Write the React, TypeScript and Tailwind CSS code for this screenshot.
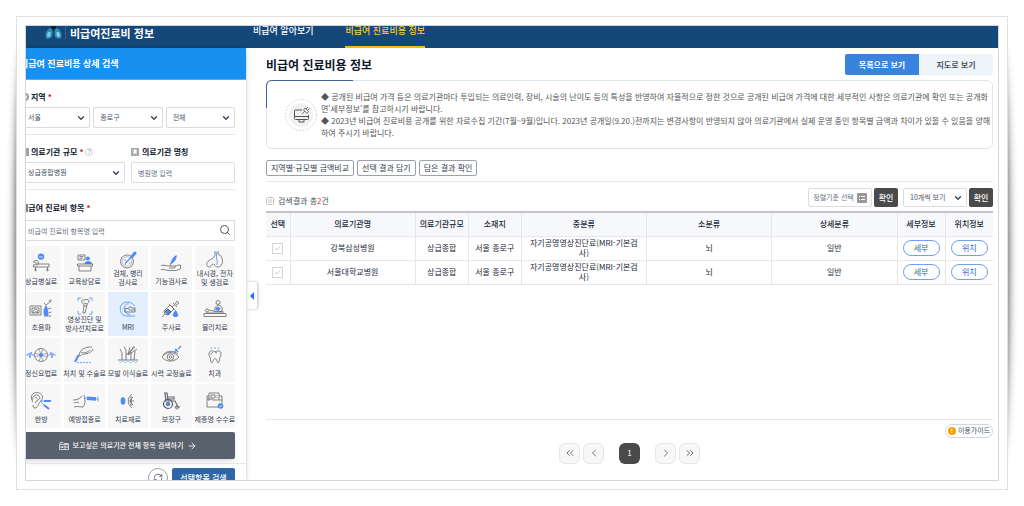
import { useState } from "react";
import type { ReactNode } from "react";
import { ArrowRight, ChevronDown, ChevronLeft, ChevronRight, ChevronsLeft, ChevronsRight, Search, RefreshCw, Check } from "lucide-react";

type Item = { name: string; lines: string[]; icon: ReactNode };

const BLUE = "#4f8bf9";

const items: Item[] = [
  {
    name: "bed",
    lines: ["상급병실료"],
    icon: (
      <>
        <circle cx="9" cy="2.6" r="3.2" fill={BLUE} stroke="none" />
        <path d="M7.4 2l.8 1.6.8-1.4.8 1.4.8-1.6" stroke="#fff" strokeWidth="0.5" />
        <path d="M1 7.6l5 2.4h11v3H1.5v-2.2h4.6M2 7l3.2-.6 2 3.2M3.5 13v3.2M15.5 13v3.2" />
        <circle cx="3.5" cy="16" r="0.8" />
        <circle cx="15.5" cy="16" r="0.8" />
      </>
    ),
  },
  {
    name: "education",
    lines: ["교육상담료"],
    icon: (
      <>
        <path d="M2 1h7v5H2zM3.5 2.6h4M3.5 4.2h3" />
        <circle cx="11.8" cy="4.6" r="2" fill={BLUE} stroke="none" />
        <path d="M8.4 10c0-4 7.600-4 7.600 0z" fill={BLUE} stroke="none" />
        <path d="M1.500 10h15v2h-15zM3 12v5h12v-5" />
      </>
    ),
  },
  {
    name: "specimen",
    lines: ["검체, 병리", "검사료"],
    icon: (
      <>
        <circle cx="8" cy="10.500" r="6.500" />
        <circle cx="8" cy="10.500" r="4.800" strokeWidth="0.4" />
        <path d="M6 12.500l8-8" stroke={BLUE} strokeWidth="1.200" />
        <path d="M13 5.500l3-3.500" stroke={BLUE} strokeWidth="3" strokeLinecap="round" />
        <path d="M5 9h2M6 13.500h1M10 12h1.500" stroke={BLUE} />
      </>
    ),
  },
  {
    name: "function",
    lines: ["기능검사료"],
    icon: (
      <>
        <path d="M9 9l-1 3" stroke={BLUE} />
        <path d="M8.500 10.500c0-4 3-8 6-9.500 1 3-2 7.500-6 9.500z" fill={BLUE} stroke="none" />
        <path d="M-1 11.500c3-1 5 .5 8 .5h6c2 0 4-1.500 5.500-1v4c-2 0-3 1.500-5 1.500H7c-3 0-5-1.500-8-1M7 14h5l2-1.500" />
      </>
    ),
  },
  {
    name: "endoscopy",
    lines: ["내시경, 전자", "및 생검료"],
    icon: (
      <>
        <path d="M9 0v4c0 3-4 4-6 5.500-4 3-2 7.500 1 6.500 2-1 1-3 3-3" />
        <path d="M12 0v3c6 2 6 13 0 13-2 0-3-1-4-3" />
        <path d="M10.500 1v6c0 3 2 4 0 7" stroke={BLUE} />
      </>
    ),
  },
  {
    name: "ultrasound",
    lines: ["초음파"],
    icon: (
      <>
        <path d="M-2 6h11v9H-2zM0 8h7v5H0zM1 13c0-5 5-5 5 0M2.500 12.500c1-1.500 2-1 2.500 0" />
        <path d="M12 3l2 2 4-3M18 2c2-1 2-2 .5-2s-1.500 1-.5 2zM16 9l3-1M16.500 13l3-1M12 16h7" />
        <path d="M14 5c-3 4-3 9-1.500 11h3.500c1-3 0-8-2-11z" fill={BLUE} stroke="none" />
      </>
    ),
  },
  {
    name: "radiology",
    lines: ["영상진단 및", "방사선치료료"],
    icon: (
      <>
        <path d="M2 4V1h3M13 1h3v3M16 14v3h-3M5 17H2v-3" stroke={BLUE} />
        <path d="M6 5c-1-2 1-3 2-1.500C9 2 13 2 13 4c0 2-2 2-2 4l-2 8H7l1-8c0-2-2-1-2-3zM8 6l3 1M8 9h3" />
      </>
    ),
  },
  {
    name: "mri",
    lines: ["MRI"],
    icon: (
      <>
        <path d="M8 2C-1 2-1 16 8 16h8M8 2c3 0 6 1 7.500 4M11 14.500c-7 0-8-10-1.500-11" stroke={BLUE} />
        <path d="M6 8.500h3c1-2 3-2 4-.5h3v4H6zM9 8.500l2 1.500h5" />
      </>
    ),
  },
  {
    name: "injection",
    lines: ["주사료"],
    icon: (
      <>
        <path d="M0 17l3-3M3 14l-1-3 6-6 4 4-6 6zM7 4l6 6M10 7l3-3M11 3l4 4M13 4l2-3 2 2-3 2" />
        <path d="M3 11.500L6 9l3 3-3 2.500z" fill={BLUE} stroke="#345" />
        <path d="M13.500 10c-5 6-2 7 0 7s5-1 0-7z" fill={BLUE} stroke="none" />
      </>
    ),
  },
  {
    name: "physio",
    lines: ["물리치료"],
    icon: (
      <>
        <circle cx="12" cy="2.500" r="2" />
        <path d="M8.500 11c0-7 7-8 8-1l-3 2" />
        <path d="M9.500 10c0-4 4-4 5-1l-2 2z" fill={BLUE} stroke="none" />
        <circle cx="1" cy="10.500" r="1.500" />
        <path d="M3 10l6 1.500h8v1.500H0M-2 13.500h22v3H-2z" />
      </>
    ),
  },
  {
    name: "mental",
    lines: ["정신요법료"],
    icon: (
      <>
        <path d="M-6 9h2l1-2 1 5 1-6 1 3h2M16 9h2l1-3 1 6 1-5 1 2h2" stroke={BLUE} />
        <circle cx="9" cy="9" r="6.500" />
        <path d="M3 7c4 2 8 2 12 0M3 11c4-2 8-2 12 0M7 3c2 4 2 8 0 12M11 3c-2 4-2 8 0 12" strokeWidth="0.6" />
        <circle cx="9" cy="9" r="2" fill={BLUE} stroke="none" />
      </>
    ),
  },
  {
    name: "surgery",
    lines: ["처치 및 수술료"],
    icon: (
      <>
        <path d="M16 1c-4 0-10 1-12 5l-1 4c2 0 3-2 5-2 4 0 8-2 9-5M5 6c3 2 7 0 9-2" />
        <path d="M2.500 9L-1 16" stroke={BLUE} strokeWidth="2" />
        <path d="M1 16.500h15" stroke={BLUE} strokeDasharray="2 1" />
      </>
    ),
  },
  {
    name: "hair",
    lines: ["모발 이식술료"],
    icon: (
      <>
        <path d="M-1 14h4V7M3 7L1 3M3 14h4V4L5 1M7 14h5V6M12 14h3l1-9M15 14h4M7 9l9-8M9 9l9-6M11 1l-2 8M15 0l-5 8" />
        <path d="M0 16c2 1 3-2 5 0s3-2 5 0 3-2 5 0 3-1 4 0" stroke={BLUE} strokeWidth="0.5" />
      </>
    ),
  },
  {
    name: "vision",
    lines: ["시력 교정술료"],
    icon: (
      <>
        <path d="M0 11c4-6 12-6 17 0-5 5.500-13 5.500-17 0zM1 9c4-5 11-4.500 15-1" />
        <circle cx="8.500" cy="11" r="3.300" />
        <circle cx="8.500" cy="11" r="1.300" />
        <path d="M12 7l3-4M13 3l3 3M16 3l3-3" stroke={BLUE} strokeWidth="1.200" />
      </>
    ),
  },
  {
    name: "dental",
    lines: ["치과"],
    icon: (
      <>
        <path d="M9 1v2M5 1.500l.6 1.400M13 1.500l-.6 1.400" stroke={BLUE} />
        <path d="M9 6C6 4 3 4.500 3 8c0 2.500 1.500 3 1.500 5.500 0 3.500 2 4.500 2.500 1.500.4-3 3.600-3 4 0 .5 3 2.500 2 2.500-1.500 0-2.500 1.500-3 1.500-5.500 0-3.500-3-4-6-2zM5 8.500c0-1.500 1-2 2-2M9 6l2 1" />
      </>
    ),
  },
  {
    name: "oriental",
    lines: ["한방"],
    icon: (
      <>
        <path d="M1 10C-4 3 3-1 7 1c5 2 4 6 1 9-2 2-2 6-5 6-2 0-2-2-2-3M1 8c-1-4 2-5 4-5 4 1 3 4 1 5-2 0-1 2-3 3M3 6c1-1 2 0 2 1" />
        <path d="M8 9h4M9 10l3 3" stroke={BLUE} />
        <path d="M12 9h7M12 13l5 4" stroke={BLUE} strokeWidth="2" />
      </>
    ),
  },
  {
    name: "vaccine",
    lines: ["예방접종료"],
    icon: (
      <>
        <path d="M-3 8c4 0 7-1 9-4M8 3c1 4 2 8-1 12-3 0-7-1-9 0M-2 11c2-1 4-1 5 0" />
        <path d="M8 6h3M20 7h2M22 4.500v5" stroke={BLUE} />
        <path d="M11 6.300l9 .8" stroke={BLUE} strokeWidth="3.500" />
      </>
    ),
  },
  {
    name: "material",
    lines: ["치료재료"],
    icon: (
      <>
        <ellipse cx="4" cy="9" rx="2.400" ry="3.800" fill={BLUE} stroke="none" />
        <path d="M13 2c-5 4-5 10 0 14M14 5c-3 3-3 5 0 8M12 4v10M10 9h5" />
      </>
    ),
  },
  {
    name: "aid",
    lines: ["보장구"],
    icon: (
      <>
        <path d="M2 1h3l1 8h7l3 6h2M6 5h6v2H6M3 1l1 9M13 15h3" strokeWidth="1.200" />
        <circle cx="6" cy="12" r="4.500" stroke="#3f5a8c" strokeWidth="1.200" />
        <circle cx="6" cy="12" r="1.800" fill={BLUE} />
        <circle cx="15" cy="15.500" r="1.500" />
      </>
    ),
  },
  {
    name: "certificate",
    lines: ["제증명 수수료"],
    icon: (
      <>
        <path d="M3 9V1h10v7M5 3h4v3H5zM10.500 3.500h1M10.500 5.500h1M1 4h2M1 4v11h15V8H7L5 7H1M13 4h3v4" />
        <circle cx="14.500" cy="14" r="2.800" fill={BLUE} stroke="none" />
        <path d="M13.300 14l1 1 1.500-1.800" stroke="#fff" strokeWidth="0.7" />
      </>
    ),
  },
];

const rows = [
  { name: "강북삼성병원", grade: "상급종합", place: "서울 종로구", mid: "자기공명영상진단료(MRI-기본검사)", sub: "뇌", detail: "일반" },
  { name: "서울대학교병원", grade: "상급종합", place: "서울 종로구", mid: "자기공명영상진단료(MRI-기본검사)", sub: "뇌", detail: "일반" },
];

const columns = ["선택", "의료기관명", "의료기관규모", "소재지", "중분류", "소분류", "상세분류", "세부정보", "위치정보"];

function SelectBox({ label, value, className = "" }: { label: string; value: string; className?: string }) {
  return (
    <div className={`relative min-w-0 ${className}`}>
      <select aria-label={label} className="block w-full h-full appearance-none rounded-xs border border-[#dcdcdc] bg-white pl-1.5 pr-4 text-[7px] text-gray-600">
        <option>{value}</option>
      </select>
      <ChevronDown className="pointer-events-none absolute right-1 top-1/2 size-2.5 -translate-y-1/2 text-gray-700" strokeWidth={3} />
    </div>
  );
}

function Header() {
  return (
    <header className="-mt-[22px] flex h-11 shrink-0 items-end bg-[#14487b] text-white">
      <div className="flex w-[220px] shrink-0 items-end pl-[19px] pb-[9px]">
        <svg className="h-5 w-[17px]" viewBox="0 0 16 20" aria-hidden="true">
          <path d="M4 2l3 4v3l-2 3M12 2L9 6v3l2 3" fill="none" stroke="#0b2038" strokeWidth="3" />
          <path d="M5 9c-3 1-5 4-5 8 0 3 3 3.500 5 2 2-1 2.500-5 1.500-9zM11 9c3 1 5 4 5 8 0 3-3 3.500-5 2-2-1-2.500-5-1.500-9z" fill="#2f8fb8" />
          <path d="M3 13c-2 2-2 5 0 5s2-2 2-5zM13 13c2 2 2 5 0 5s-2-2-2-5z" fill="#7fd0e4" />
        </svg>
        <div className="ml-[3px] border-l border-white/15 pl-1">
          <p className="text-[9px] leading-[10px] font-bold">HIRA</p>
          <h1 className="text-[11px] leading-[12px] font-bold whitespace-nowrap">비급여진료비 정보</h1>
        </div>
      </div>
      <nav className="ml-[7px] flex gap-8 text-[9px] font-medium whitespace-nowrap">
        <a href="#" className="h-[23px] leading-[12px] border-b-2 border-transparent">비급여 알아보기</a>
        <a href="#" className="h-[23px] leading-[12px] border-b-2 border-[#fdb913] text-[#fdc544]" aria-current="page">비급여 진료비용 정보</a>
      </nav>
    </header>
  );
}

function Sidebar() {
  const [selected, setSelected] = useState<string>("mri");

  return (
    <aside className="relative z-10 -ml-4 w-[236px] shrink-0 bg-white shadow-[0_0_4px_rgba(0,0,0,0.25)]">
      <h2 className="h-8 border-b border-[#55aef5] bg-[#1890f0] pl-2.5 text-[9px] leading-[31px] font-bold text-white">비급여 진료비용 상세 검색</h2>
      <div className="px-[11px]">
        <section className="border-b border-gray-200 pt-[11px] pb-1.5">
          <h3 className="mb-1 flex items-center text-[8px] leading-[12px] font-bold text-gray-900">
            <span className="mr-0.5 size-2 rounded-full border-2 border-gray-400" />지역<span className="ml-0.5 text-red-600">*</span>
          </h3>
          <div className="grid h-[21px] grid-cols-3 gap-[3px]">
            <SelectBox label="시도" value="서울" />
            <SelectBox label="시군구" value="종로구" />
            <SelectBox label="읍면동" value="전체" />
          </div>
        </section>
        <section className="flex gap-1.5 border-b border-gray-200 pt-[11px] pb-1.5">
          <div className="flex-1">
            <h3 className="mb-1 flex items-center text-[8px] leading-[12px] font-bold text-gray-900">
              <span className="mr-0.5 size-2 bg-gray-400" />의료기관 규모<span className="ml-0.5 text-red-600">*</span>
              <span className="ml-0.5 size-2 rounded-full border border-gray-300 text-center text-[6px] leading-[6px] font-normal text-gray-500">?</span>
            </h3>
            <SelectBox label="의료기관 규모" value="상급종합병원" className="h-[21px]" />
          </div>
          <div className="flex-1">
            <label htmlFor="hospital" className="mb-1 flex items-center text-[8px] leading-[12px] font-bold text-gray-900">
              <svg className="mr-[3px] size-2" viewBox="0 0 8 8" aria-hidden="true"><path d="M0 0h8v8H0z" fill="#aaa" /><path d="M2.500 1.500h3v5L4 5 2.500 6.500z" fill="#fff" /></svg>의료기관 명칭
            </label>
            <input id="hospital" placeholder="병원명 입력" className="block h-[21px] w-full rounded-xs border border-[#dcdcdc] px-1.5 text-[7px] placeholder:text-gray-500" />
          </div>
        </section>
        <section className="pt-3">
          <label htmlFor="item" className="mb-1.5 block text-[8px] leading-[12px] font-bold text-gray-900">비급여 진료비 항목 <span className="text-red-600">*</span></label>
          <div className="relative">
            <input id="item" placeholder="비급여 진료비 항목명 입력" className="block h-[21px] w-full border border-[#dcdcdc] px-1.5 text-[7px] placeholder:text-gray-500" />
            <Search className="absolute top-1 right-1 size-3 text-gray-600" strokeWidth={2} />
          </div>
          <div className="mt-[5px] grid grid-cols-5 gap-x-[3px] gap-y-0.5">
            {items.map((item) => (
              <button
                key={item.name}
                type="button"
                onClick={() => setSelected(item.name)}
                className={`flex h-11 min-w-0 flex-col items-center text-[7px] leading-[9px] text-gray-700 ${item.lines.length > 1 ? "pt-[5px]" : "gap-[5px] pt-2"} ${selected === item.name ? "bg-[#e3eeff]" : "bg-[#f7f7f7]"}`}
              >
                <svg className="size-[18px] shrink-0 overflow-visible" viewBox="0 0 18 18" fill="none" stroke="#666" strokeWidth="0.8" aria-hidden="true">{item.icon}</svg>
                <span className="whitespace-nowrap">
                  {item.lines.map((line) => <span key={line} className="block">{line}</span>)}
                </span>
              </button>
            ))}
          </div>
          <button type="button" className="mt-1 flex h-[27px] w-full items-center justify-center gap-1 rounded-xs bg-[#59616c] text-[7px] font-medium text-white shadow-md">
            <svg className="h-2 w-2.5" viewBox="0 0 10 8" fill="none" stroke="currentColor" strokeWidth="0.7" aria-hidden="true">
              <path d="M1 2V.5h3l1 1h4V3M.5 2.500h9v5h-9zM2 4v2M3.500 4v2M2 5h1.500M5 4h2v2H5zM8.300 4v2" />
            </svg>
            보고싶은 의료기관 전체 항목 검색하기
            <ArrowRight className="size-2.5" strokeWidth={2} />
          </button>
        </section>
      </div>
      <div className="mt-1 flex justify-end gap-1 border-t border-gray-200 px-[11px] pt-1">
        <button type="button" aria-label="초기화" className="flex size-5 items-center justify-center rounded-full border border-gray-400 text-gray-600"><RefreshCw className="size-2.5" /></button>
        <button type="button" className="h-5 w-[63px] rounded-xs bg-[#2f66a5] text-[8px] font-medium text-white">선택항목 검색</button>
      </div>
    </aside>
  );
}

function Notice() {
  return (
    <div className="relative mt-[5px] flex h-[69px] items-center rounded-md border border-[#dbe5ec] pl-[18px]">
      <span className="absolute -top-px -left-px h-7 w-[87px] rounded-tl-md border-t border-[#3f6090]" />
      <span className="absolute -top-px -left-px h-7 w-2 rounded-tl-md border-l border-[#3f6090]" />
      <svg className="mr-1 size-8 shrink-0" viewBox="0 0 32 32" fill="none" stroke="#555" aria-hidden="true">
        <circle cx="16" cy="16" r="15.500" stroke="#ccc" strokeDasharray="2 1.500" strokeWidth="0.8" />
        <circle cx="16" cy="16" r="12" fill="#f1f1f1" stroke="none" />
        <path d="M17 11h-6.500q-1 0-1 1v7.500q0 1 1 1h12q1 0 1-1V16M9.500 17.500h14M14 20.500v2.500h5v-2.500" />
        <path d="M17 15l3-3M20 9l3.500 3.500-1.500 2-3.500-3.500zM23 8l-2 2M24.500 9.500l-2 2" strokeWidth="0.8" />
      </svg>
      <p className="text-[8px] leading-[12px] text-[#555]">
        ◆ 공개된 비급여 가격 등은 의료기관마다 투입되는 의료인력, 장비, 시술의 난이도 등의 특성을 반영하여 자율적으로 정한 것으로 공개된 비급여 가격에 대한 세부적인 사항은 의료기관에 확인 또는 공개화<br />
        면'세부정보'를 참고하시기 바랍니다.<br />
        ◆ 2023년 비급여 진료비용 공개를 위한 자료수집 기간(7월~9월)입니다. 2023년 공개일(9.20.)전까지는 변경사항이 반영되지 않아 의료기관에서 실제 운영 중인 항목별 금액과 차이가 있을 수 있음을 양해<br />
        하여 주시기 바랍니다.
      </p>
    </div>
  );
}

function ResultTable() {
  return (
    <table className="w-full table-fixed border-t-2 border-[#c2c4c7] text-center text-[8px] leading-[10px] text-gray-800">
      <colgroup>
        <col className="w-6" />
        <col />
        <col className="w-[53px]" />
        <col className="w-[53px]" />
        <col />
        <col />
        <col />
        <col className="w-12" />
        <col className="w-12" />
      </colgroup>
      <thead className="bg-[#f6f8fb]">
        <tr className="h-6 border-b border-gray-200">
          {columns.map((c) => <th key={c} className="border-r border-gray-200 p-0 font-medium whitespace-nowrap last:border-r-0">{c}</th>)}
        </tr>
      </thead>
      <tbody>
        {rows.map((row) => (
          <tr key={row.name} className="h-6 border-b border-gray-200 [&>td]:border-r [&>td]:border-gray-200 [&>td]:p-0 [&>td:last-child]:border-r-0">
            <td>
              <label className="relative mx-auto block size-[11px]">
                <input type="checkbox" aria-label={`${row.name} 선택`} className="block size-[11px] appearance-none border border-gray-300 bg-white" />
                <Check className="absolute top-0.5 left-0.5 size-[7px] text-gray-400" />
              </label>
            </td>
            <td>{row.name}</td>
            <td>{row.grade}</td>
            <td>{row.place}</td>
            <td><span className="block px-1.5 break-all">{row.mid}</span></td>
            <td>{row.sub}</td>
            <td>{row.detail}</td>
            <td><button type="button" className="h-4 w-[37px] rounded-full border border-[#6fa2ea] text-[#2b66c4]">세부</button></td>
            <td><button type="button" className="h-4 w-[37px] rounded-full border border-[#6fa2ea] text-[#2b66c4]">위치</button></td>
          </tr>
        ))}
      </tbody>
    </table>
  );
}

function Pagination() {
  const button = "flex size-[21px] items-center justify-center rounded-md border border-gray-200 bg-[#f7f7f7] text-gray-500";

  return (
    <nav className="flex justify-center gap-[3px]" aria-label="페이지">
      <button type="button" aria-label="처음" className={button}><ChevronsLeft className="size-3" /></button>
      <button type="button" aria-label="이전" className={button}><ChevronLeft className="size-3" /></button>
      <button type="button" aria-current="page" className="mx-3 size-[21px] rounded-md bg-[#4a4a4a] text-[8px] text-white">1</button>
      <button type="button" aria-label="다음" className={button}><ChevronRight className="size-3" /></button>
      <button type="button" aria-label="마지막" className={button}><ChevronsRight className="size-3" /></button>
    </nav>
  );
}

function Main() {
  return (
    <main className="relative min-w-0 flex-1 pt-1.5 pr-[5px] pl-5">
      <button type="button" aria-label="검색창 닫기" className="absolute top-[234px] left-0 flex h-[27px] w-[11px] items-center justify-center rounded-r-xs bg-white shadow-[1px_0_3px_rgba(0,0,0,0.25)]">
        <svg className="h-2 w-1" viewBox="0 0 4 8" fill="#0a7cff" aria-hidden="true"><path d="M4 0v8L0 4z" /></svg>
      </button>
      <div className="flex items-center justify-between">
        <h2 className="text-[12px] leading-[16px] font-bold text-gray-900">비급여 진료비용 정보</h2>
        <div className="flex h-[21px] text-[8px] font-bold">
          <button type="button" className="w-[74px] rounded-l-xs bg-[#3a83dc] text-white">목록으로 보기</button>
          <button type="button" className="w-[74px] rounded-r-xs bg-[#eff4f8] text-gray-600">지도로 보기</button>
        </div>
      </div>
      <Notice />
      <div className="mt-[11px] flex gap-[3px] border-b border-gray-200 pb-[5px] text-[8px] leading-[14px] text-gray-700">
        <button type="button" className="rounded-xs border border-gray-400 px-1">지역별·규모별 금액비교</button>
        <button type="button" className="rounded-xs border border-gray-400 px-1">선택 결과 담기</button>
        <button type="button" className="rounded-xs border border-gray-400 px-1">담은 결과 확인</button>
      </div>
      <div className="mt-1.5 mb-1 flex h-[19px] items-center text-[8px]">
        <svg className="mt-1.5 size-2" viewBox="0 0 8 8" fill="none" stroke="#c4c4c4" aria-hidden="true"><rect x="0.500" y="0.500" width="7" height="7" rx="1" /><path d="M2 3h4M2 5h4" /></svg>
        <p className="mt-1.5 ml-1 leading-[10px] text-gray-600">검색결과 총<span className="text-red-500">2</span>건</p>
        <button type="button" className="ml-auto flex h-full w-16 items-center justify-center gap-[3px] rounded-xs border border-[#dcdcdc] text-[7px] text-gray-500">
          정렬기준 선택
          <svg className="h-2.5 w-2.5" viewBox="0 0 10 10" fill="none" stroke="#fff" aria-hidden="true"><rect width="10" height="10" rx="1" fill="#999" stroke="none" /><path d="M2 3.500h1M4 3.500h4M2 6.500h1M4 6.500h4" /></svg>
        </button>
        <button type="button" className="ml-0.5 h-full w-6 rounded-xs bg-[#4a4a4a] font-medium text-white">확인</button>
        <SelectBox label="보기 개수" value="10개씩 보기" className="ml-[5px] h-full w-16" />
        <button type="button" className="ml-0.5 h-full w-6 rounded-xs bg-[#4a4a4a] font-medium text-white">확인</button>
      </div>
      <ResultTable />
      <div className="mt-[134px] border-t border-gray-200 pt-1">
        <button type="button" className="ml-auto flex h-[14px] w-12 items-center justify-center gap-0.5 rounded-full border border-gray-300 text-[7px] whitespace-nowrap text-gray-600">
          <span className="size-2 rounded-full bg-[#ff9c00] text-[6px] leading-[8px] font-bold text-white">!</span>이용가이드
        </button>
      </div>
      <div className="mt-[5px]">
        <Pagination />
      </div>
    </main>
  );
}

export default function App() {
  return (
    <div className="h-screen bg-white p-4 font-['Noto_Sans_CJK_KR',sans-serif]" lang="ko">
      <div className="relative isolate h-full">
        <span className="absolute inset-x-0 inset-y-[30px] -z-10 rounded-[10px/200px] shadow-[0_0_10px_rgba(0,0,0,0.8)]" />
        <div className="h-full border border-[#e0e0e0] bg-white p-2">
          <div className="flex h-full flex-col overflow-hidden border border-gray-300">
            <Header />
            <div className="flex min-h-0 flex-1">
              <Sidebar />
              <Main />
            </div>
          </div>
        </div>
      </div>
    </div>
  );
}
